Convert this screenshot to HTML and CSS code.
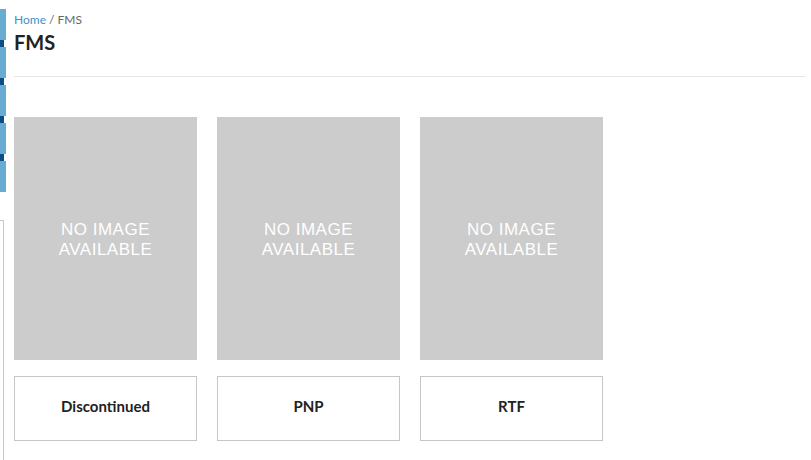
FILE: index.html
```html
<!DOCTYPE html>
<html lang="en">
<head>
    <meta charset="UTF-8">
    <meta name="viewport" content="width=device-width, initial-scale=1.0">
    <title>FMS</title>
    <link rel="stylesheet" href="styles.css">
</head>
<body>
    <div class="layout">
        <!-- Collapsed side menu -->
        <aside class="side">
            <div class="side-tabs">
                <span class="tab"></span>
                <span class="tab-gap"></span>
                <span class="tab"></span>
                <span class="tab-gap"></span>
                <span class="tab"></span>
                <span class="tab-gap"></span>
                <span class="tab"></span>
                <span class="tab-gap"></span>
                <span class="tab"></span>
            </div>
            <div class="side-box"></div>
        </aside>

        <main class="main">
            <header class="page-header">
                <div class="breadcrumb"><a href="#">Home</a> / FMS</div>
                <h1 class="page-title">FMS</h1>
            </header>

            <!-- Category cards -->
            <section class="cards">
                <a class="card" href="#">
                    <div class="card-image">NO IMAGE<br>AVAILABLE</div>
                    <div class="card-label">Discontinued</div>
                </a>
                <a class="card" href="#">
                    <div class="card-image">NO IMAGE<br>AVAILABLE</div>
                    <div class="card-label">PNP</div>
                </a>
                <a class="card" href="#">
                    <div class="card-image">NO IMAGE<br>AVAILABLE</div>
                    <div class="card-label">RTF</div>
                </a>
            </section>
        </main>
    </div>
</body>
</html>
```

FILE: styles.css
```css
/* General styles */
body {
    margin: 0;
    padding: 0;
    font-family: Lato, "Liberation Sans", sans-serif;
    color: #222;
    background: #fff;
    overflow: hidden;
    height: 100vh;
}

.layout {
    display: flex;
    height: 100%;
}

/* Side menu, mostly off screen */
.side {
    width: 6px;
    flex-shrink: 0;
    padding-top: 9px;
    display: flex;
    flex-direction: column;
}

.side-tabs {
    display: flex;
    flex-direction: column;
}

.tab {
    display: block;
    height: 30.5px;
    background: #68acd2;
}

.tab-gap {
    display: block;
    width: 4px;
    height: 7.5px;
    background: #0b4d85;
}

.side-box {
    margin-top: 28px;
    width: 3px;
    flex: 1;
    border: 1px solid #c8c8c8;
    border-left: none;
    border-bottom: none;
}

/* Main column */
.main {
    flex: 1;
    margin-left: 8px;
    margin-right: 5px;
}

.page-header {
    padding-top: 12px;
    padding-bottom: 22px;
    border-bottom: 1px solid #e6e6e6;
}

.breadcrumb {
    font-size: 12px;
    line-height: 16px;
    color: #666;
}

.breadcrumb a {
    color: #3d8fcf;
    text-decoration: none;
}

.page-title {
    margin: 2px 0 0;
    font-size: 20px;
    line-height: 24px;
    font-weight: 700;
    color: #222;
}

/* Cards */
.cards {
    margin-top: 40px;
    display: grid;
    grid-template-columns: repeat(3, 183px);
    gap: 20px;
}

.card {
    display: flex;
    flex-direction: column;
    gap: 16px;
    text-decoration: none;
    color: #222;
}

.card-image {
    height: 243px;
    padding-top: 2px;
    box-sizing: border-box;
    background: #cccccc;
    display: flex;
    align-items: center;
    justify-content: center;
    text-align: center;
    font-family: "Liberation Sans", Arial, sans-serif;
    font-size: 17px;
    line-height: 20px;
    letter-spacing: 0.5px;
    color: #fff;
}

.card-label {
    height: 65px;
    padding-bottom: 6px;
    box-sizing: border-box;
    border: 1px solid #c6c6c6;
    display: flex;
    align-items: center;
    justify-content: center;
    font-size: 15px;
    font-weight: 700;
}
```
